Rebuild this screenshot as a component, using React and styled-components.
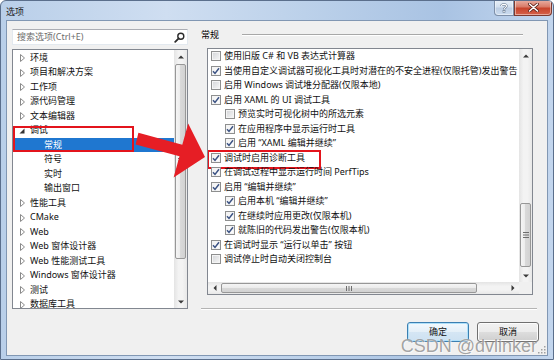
import React from 'react';
import styled, { createGlobalStyle } from 'styled-components';

const Global = createGlobalStyle`
  html, body { margin: 0; padding: 0; width: 554px; height: 360px; overflow: hidden; background: #fff; }
  #root { width: 554px; height: 360px; }
  * { box-sizing: border-box; }
`;

const FONT = `"Noto Sans", "Noto Sans CJK SC", sans-serif`;

const Window = styled.div`
  position: relative;
  width: 554px;
  height: 360px;
  display: flex;
  flex-direction: column;
  background: linear-gradient(to right, #b9cfe9 0%, #cfdef1 30%, #bcd1ea 55%, #a9c3e3 80%, #c3d6ee 100%);
  border: 1px solid #5b6f8c;
  border-radius: 6px 6px 0 0;
  font-family: ${FONT};
  font-size: 9px;
  color: #000;
  overflow: hidden;
`;

const TitleBar = styled.div`
  height: 19px;
  flex: none;
  display: flex;
  align-items: flex-start;
  padding-left: 5px;
`;

const Title = styled.div`
  align-self: center;
  font-size: 9px;
  line-height: 12px;
  margin-top: 2px;
  color: #1a1a1a;
  flex: 1;
`;

const CaptionBtn = styled.div`
  height: 16px;
  width: ${p => p.$w}px;
  display: flex;
  align-items: center;
  justify-content: center;
  border: 1px solid ${p => (p.$close ? '#7d3a2f' : '#7d8fa8')};
  border-top: none;
  border-radius: ${p => (p.$close ? '0 0 4px 0' : '0 0 0 4px')};
  background: ${p =>
    p.$close
      ? 'linear-gradient(#eab1a5 0%, #d97b68 45%, #c8442c 55%, #d5624a 100%)'
      : 'linear-gradient(#e9f0f8 0%, #d3e0ef 45%, #bccde3 55%, #cbdcef 100%)'};
  box-shadow: inset 0 0 0 1px rgba(255,255,255,0.45);
`;

const CaptionGroup = styled.div`
  display: flex;
  margin-right: 1px;
  margin-top: -1px;
`;

const Client = styled.div`
  position: relative;
  flex: 1;
  margin: 0 5px 3px 5px;
  background: #f0f0f0;
  border: 1px solid #8197b3;
  display: grid;
  grid-template-columns: 176px 1fr;
  column-gap: 13px;
  padding: 8px 8px 0 5px;
  align-items: start;
`;

const LeftCol = styled.div`
  display: flex;
  flex-direction: column;
`;

const SearchBox = styled.div`
  height: 16px;
  display: flex;
  align-items: center;
  justify-content: space-between;
  background: #fff;
  border: 1px solid #e3e9ef;
  border-top-color: #abadb3;
  padding: 0 2px 0 4px;
  color: #6d6d6d;
  font-size: 9px;
  line-height: 12px;
`;

const Tree = styled.div`
  margin-top: 4px;
  height: 260px;
  background: #fff;
  border: 1px solid #828790;
  display: grid;
  grid-template-columns: 1fr 13px;
  overflow: hidden;
`;

const TreeContent = styled.div`
  position: relative;
  overflow: hidden;
  padding-top: 0.75px;
`;

const TreeRow = styled.div`
  height: 14.5px;
  display: flex;
  align-items: center;
  padding-left: ${p => 6 + p.$depth * 14}px;
  background: ${p => (p.$selected ? '#1f77d0' : 'transparent')};
  color: ${p => (p.$selected ? '#fff' : '#111')};
  white-space: nowrap;
  line-height: 14.5px;
`;

const ArrowSlot = styled.span`
  width: 6px;
  margin-right: 5px;
  display: flex;
  align-items: center;
  justify-content: center;
  flex: none;
`;

const Annot = styled.div`
  position: absolute;
  left: ${p => p.$l}px;
  top: ${p => p.$t}px;
  width: ${p => p.$w}px;
  height: ${p => p.$h}px;
  border: 2px solid #e3141c;
  pointer-events: none;
`;

const RightCol = styled.div`
  display: flex;
  flex-direction: column;
`;

const Header = styled.div`
  height: 12px;
  display: flex;
  align-items: center;
  margin-bottom: 7px;
  line-height: 12px;
`;

const HeaderLine = styled.div`
  flex: 1;
  margin: 0 16px 0 23px;
  border-top: 1px solid #a8a8a8;
  border-bottom: 1px solid #ffffff;
`;

const ListBox = styled.div`
  height: 247px;
  margin: 0 6px;
  background: #fff;
  border: 1px solid #828790;
  display: grid;
  grid-template-columns: 1fr 13px;
  grid-template-rows: 1fr 12px;
  overflow: hidden;
`;

const ListContent = styled.div`
  overflow: hidden;
`;

const OptRow = styled.div`
  height: 14.5px;
  display: flex;
  align-items: center;
  padding-left: ${p => 3 + p.$depth * 14}px;
  white-space: nowrap;
  line-height: 14.5px;
  color: #111;
`;

const OptInner = styled.span`
  position: relative;
  display: inline-flex;
  align-items: center;
  &::after {
    content: '';
    display: ${p => (p.$mark ? 'block' : 'none')};
    position: absolute;
    top: -1px;
    bottom: -4px;
    left: -4px;
    right: -16px;
    border: 2px solid #e3141c;
  }
`;

const CheckBox = styled.span`
  width: 10px;
  height: 10px;
  flex: none;
  margin-right: 3px;
  border: 1px solid #8e8f8f;
  display: flex;
  align-items: center;
  justify-content: center;
  background: ${p =>
    p.$checked
      ? 'linear-gradient(135deg, #f0f0f0, #ffffff)'
      : 'linear-gradient(135deg, #d2d4d7, #f7f7f7)'};
  box-shadow: inset 0 0 0 1px #f4f4f4;
`;

const VScroll = styled.div`
  width: 13px;
  display: flex;
  flex-direction: column;
  background: linear-gradient(to right, #e4e4e4, #f3f3f3 35%, #f3f3f3 65%, #e8e8e8);
`;

const HScroll = styled.div`
  height: 12px;
  display: flex;
  background: linear-gradient(#e4e4e4, #f3f3f3 35%, #f3f3f3 65%, #e8e8e8);
`;

const Corner = styled.div`
  background: #f0f0f0;
`;

const ArrowBtn = styled.div`
  flex: none;
  width: 13px;
  height: ${p => (p.$h ? 12 : 13)}px;
  display: flex;
  align-items: center;
  justify-content: center;
`;

const Track = styled.div`
  flex: 1;
  display: flex;
  flex-direction: ${p => (p.$h ? 'row' : 'column')};
`;

const Thumb = styled.div`
  flex: none;
  ${p =>
    p.$h
      ? `margin-left: ${p.$offset}px; width: ${p.$size}px; margin-top: 1px; margin-bottom: 1px;
         background: linear-gradient(#f5f5f5, #ebebeb 50%, #d9d9d9 50%, #d2d2d2);`
      : `margin-top: ${p.$offset}px; height: ${p.$size}px; margin-left: 1px; margin-right: 1px;
         background: linear-gradient(to right, #f5f5f5, #ebebeb 50%, #d9d9d9 50%, #d2d2d2);`}
  border: 1px solid #979797;
  border-radius: 2px;
  display: flex;
  align-items: center;
  justify-content: center;
`;

const Separator = styled.div`
  margin-top: 13px;
  margin-right: 2px;
  border-top: 1px solid #b4b4b4;
  border-bottom: 1px solid #ffffff;
`;

const ButtonRow = styled.div`
  margin-top: 12px;
  display: flex;
  justify-content: flex-end;
  gap: 8px;
`;

const Button = styled.div`
  width: 62px;
  height: 20px;
  display: flex;
  align-items: center;
  justify-content: center;
  border-radius: 3px;
  font-size: 9px;
  line-height: 12px;
  color: #111;
  border: 1px solid ${p => (p.$default ? '#3c7fb1' : '#707070')};
  background: ${p =>
    p.$default
      ? 'linear-gradient(#f3f9fd, #e4eff8 50%, #d5e6f4 50%, #cde1f2)'
      : 'linear-gradient(#f2f2f2, #ebebeb 50%, #dddddd 50%, #cfcfcf)'};
  box-shadow: inset 0 0 0 1px ${p => (p.$default ? '#aee0fa' : '#fcfcfc')};
`;

const Watermark = styled.div`
  position: absolute;
  right: 16px;
  bottom: 4px;
  font-family: "Liberation Sans", Arial, sans-serif;
  font-size: 18px;
  line-height: 18px;
  color: rgba(105, 105, 105, 0.62);
  text-shadow: 0 0 1px rgba(255,255,255,0.9), 1px 1px 0 rgba(255,255,255,0.5);
  pointer-events: none;
  white-space: nowrap;
`;

const Overlay = styled.svg`
  position: absolute;
  left: -1px;
  top: -1px;
  pointer-events: none;
`;

const SizeGrip = styled.svg`
  position: absolute;
  right: 1px;
  bottom: 1px;
`;

const treeItems = [
  { label: '环境', depth: 0, arrow: 'closed' },
  { label: '项目和解决方案', depth: 0, arrow: 'closed' },
  { label: '工作项', depth: 0, arrow: 'closed' },
  { label: '源代码管理', depth: 0, arrow: 'closed' },
  { label: '文本编辑器', depth: 0, arrow: 'closed' },
  { label: '调试', depth: 0, arrow: 'open' },
  { label: '常规', depth: 1, selected: true },
  { label: '符号', depth: 1 },
  { label: '实时', depth: 1 },
  { label: '输出窗口', depth: 1 },
  { label: '性能工具', depth: 0, arrow: 'closed' },
  { label: 'CMake', depth: 0, arrow: 'closed' },
  { label: 'Web', depth: 0, arrow: 'closed' },
  { label: 'Web 窗体设计器', depth: 0, arrow: 'closed' },
  { label: 'Web 性能测试工具', depth: 0, arrow: 'closed' },
  { label: 'Windows 窗体设计器', depth: 0, arrow: 'closed' },
  { label: '测试', depth: 0, arrow: 'closed' },
  { label: '数据库工具', depth: 0, arrow: 'closed' },
];

const options = [
  { t: '使用旧版 C# 和 VB 表达式计算器', c: false, d: 0 },
  { t: '当使用自定义调试器可视化工具时对潜在的不安全进程(仅限托管)发出警告', c: true, d: 0 },
  { t: '启用 Windows 调试堆分配器(仅限本地)', c: false, d: 0 },
  { t: '启用 XAML 的 UI 调试工具', c: true, d: 0 },
  { t: '预览实时可视化树中的所选元素', c: false, d: 1 },
  { t: '在应用程序中显示运行时工具', c: true, d: 1 },
  { t: '启用 “XAML 编辑并继续”', c: true, d: 1 },
  { t: '调试时启用诊断工具', c: true, d: 0, mark: true },
  { t: '在调试过程中显示运行时间 PerfTips', c: true, d: 0 },
  { t: '启用 “编辑并继续”', c: true, d: 0 },
  { t: '启用本机 “编辑并继续”', c: true, d: 1 },
  { t: '在继续时应用更改(仅限本机)', c: true, d: 1 },
  { t: '就陈旧的代码发出警告(仅限本机)', c: true, d: 1 },
  { t: '在调试时显示 “运行以单击” 按钮', c: true, d: 0 },
  { t: '调试停止时自动关闭控制台', c: false, d: 0 },
];

const TreeArrow = ({ type }) =>
  type === 'open' ? (
    <svg width="6" height="6" viewBox="0 0 6 6">
      <path d="M5.5 0.5 L5.5 5.5 L0.5 5.5 Z" fill="#333" />
    </svg>
  ) : type === 'closed' ? (
    <svg width="5" height="8" viewBox="0 0 5 8">
      <path d="M0.5 0.5 L4.5 4 L0.5 7.5 Z" fill="#fff" stroke="#8a8a8a" strokeWidth="1" />
    </svg>
  ) : null;

const Tri = ({ dir }) => {
  const d = {
    up: 'M0 3.5 L3 0.5 L6 3.5 Z',
    down: 'M0 0.5 L3 3.5 L6 0.5 Z',
    left: 'M3.5 0 L0.5 3 L3.5 6 Z',
    right: 'M0.5 0 L3.5 3 L0.5 6 Z',
  }[dir];
  const hor = dir === 'left' || dir === 'right';
  return (
    <svg width={hor ? 4 : 6} height={hor ? 6 : 4} viewBox={hor ? '0 0 4 6' : '0 0 6 4'}>
      <path d={d} fill="#3a3a3a" />
    </svg>
  );
};

const Grip = ({ h }) =>
  h ? (
    <svg width="7" height="5" viewBox="0 0 7 5">
      {[0.5, 3, 5.5].map(x => (
        <path key={x} d={`M${x} 0 V5`} stroke="#6e6e6e" strokeWidth="1" />
      ))}
    </svg>
  ) : (
    <svg width="6" height="7" viewBox="0 0 6 7">
      {[0.5, 3, 5.5].map(y => (
        <path key={y} d={`M0 ${y} H6`} stroke="#6e6e6e" strokeWidth="1" />
      ))}
    </svg>
  );

const VScrollBar = ({ offset, size }) => (
  <VScroll>
    <ArrowBtn><Tri dir="up" /></ArrowBtn>
    <Track>
      <Thumb $offset={offset} $size={size}><Grip /></Thumb>
    </Track>
    <ArrowBtn><Tri dir="down" /></ArrowBtn>
  </VScroll>
);

const HScrollBar = ({ offset, size }) => (
  <HScroll>
    <ArrowBtn $h><Tri dir="left" /></ArrowBtn>
    <Track $h>
      <Thumb $h $offset={offset} $size={size}><Grip h /></Thumb>
    </Track>
    <ArrowBtn $h><Tri dir="right" /></ArrowBtn>
  </HScroll>
);

const Check = ({ checked }) => (
  <CheckBox $checked={checked}>
    {checked && (
      <svg width="8" height="8" viewBox="0 0 8 8">
        <path d="M1 4.2 L3 6.4 L7 1.2" fill="none" stroke="#3c5384" strokeWidth="1.5" />
      </svg>
    )}
  </CheckBox>
);

const SearchIcon = () => (
  <svg width="11" height="11" viewBox="0 0 11 11">
    <circle cx="6.8" cy="4.2" r="3" fill="none" stroke="#2b2b2b" strokeWidth="1.4" />
    <path d="M4.7 6.3 L1.2 9.8" stroke="#2b2b2b" strokeWidth="1.8" strokeLinecap="round" />
  </svg>
);

export default function App() {
  return (
    <>
      <Global />
      <Window>
        <TitleBar>
          <Title>选项</Title>
          <CaptionGroup>
            <CaptionBtn $w={20}>
              <svg width="8" height="10" viewBox="0 0 8 10">
                <path d="M1.5 3 C1.5 0.8 6.5 0.8 6.5 3 C6.5 4.6 4 4.6 4 6.6" fill="none" stroke="#5d6f87" strokeWidth="2.2" />
                <path d="M1.5 3 C1.5 0.8 6.5 0.8 6.5 3 C6.5 4.6 4 4.6 4 6.6" fill="none" stroke="#fff" strokeWidth="1.1" />
                <rect x="3" y="7.6" width="2" height="2" fill="#fff" stroke="#5d6f87" strokeWidth="0.6" />
              </svg>
            </CaptionBtn>
            <CaptionBtn $w={38} $close>
              <svg width="11" height="9" viewBox="0 0 11 9">
                <path d="M1.5 1 L9.5 8 M9.5 1 L1.5 8" stroke="#5a2018" strokeWidth="3" strokeLinecap="round" />
                <path d="M1.5 1 L9.5 8 M9.5 1 L1.5 8" stroke="#fff" strokeWidth="1.6" strokeLinecap="round" />
              </svg>
            </CaptionBtn>
          </CaptionGroup>
        </TitleBar>

        <Client>
          <LeftCol>
            <SearchBox>
              <span>搜索选项(Ctrl+E)</span>
              <SearchIcon />
            </SearchBox>
            <Tree>
              <TreeContent>
                {treeItems.map(it => (
                  <TreeRow key={it.label} $depth={it.depth} $selected={it.selected}>
                    <ArrowSlot><TreeArrow type={it.arrow} /></ArrowSlot>
                    <span>{it.label}</span>
                  </TreeRow>
                ))}
                <Annot $l={0} $t={76} $w={121} $h={26} />
              </TreeContent>
              <VScrollBar offset={1} size={195} />
            </Tree>
          </LeftCol>

          <RightCol>
            <Header>
              <span>常规</span>
              <HeaderLine />
            </Header>
            <ListBox>
              <ListContent>
                {options.map(o => (
                  <OptRow key={o.t} $depth={o.d}>
                    <OptInner $mark={o.mark}>
                      <Check checked={o.c} />
                      <span>{o.t}</span>
                    </OptInner>
                  </OptRow>
                ))}
              </ListContent>
              <VScrollBar offset={141} size={64} />
              <HScrollBar offset={0} size={256} />
              <Corner />
            </ListBox>
            <Separator />
            <ButtonRow>
              <Button $default>确定</Button>
              <Button>取消</Button>
            </ButtonRow>
          </RightCol>

          <SizeGrip width="9" height="9" viewBox="0 0 9 9">
            {[[7, 1], [7, 4], [4, 4], [7, 7], [4, 7], [1, 7]].map(([x, y]) => (
              <rect key={`${x}-${y}`} x={x} y={y} width="1.5" height="1.5" fill="#a0a0a0" />
            ))}
          </SizeGrip>
        </Client>

        <Overlay width="554" height="360" viewBox="0 0 554 360">
          <polygon
            points="138.4,132.8 182.3,144.8 188.2,123.5 205,157 173.6,177.5 179.5,156.2 135.6,144.4"
            fill="#e61e25"
          />
        </Overlay>

        <Watermark>CSDN @dvlinker</Watermark>
      </Window>
    </>
  );
}
